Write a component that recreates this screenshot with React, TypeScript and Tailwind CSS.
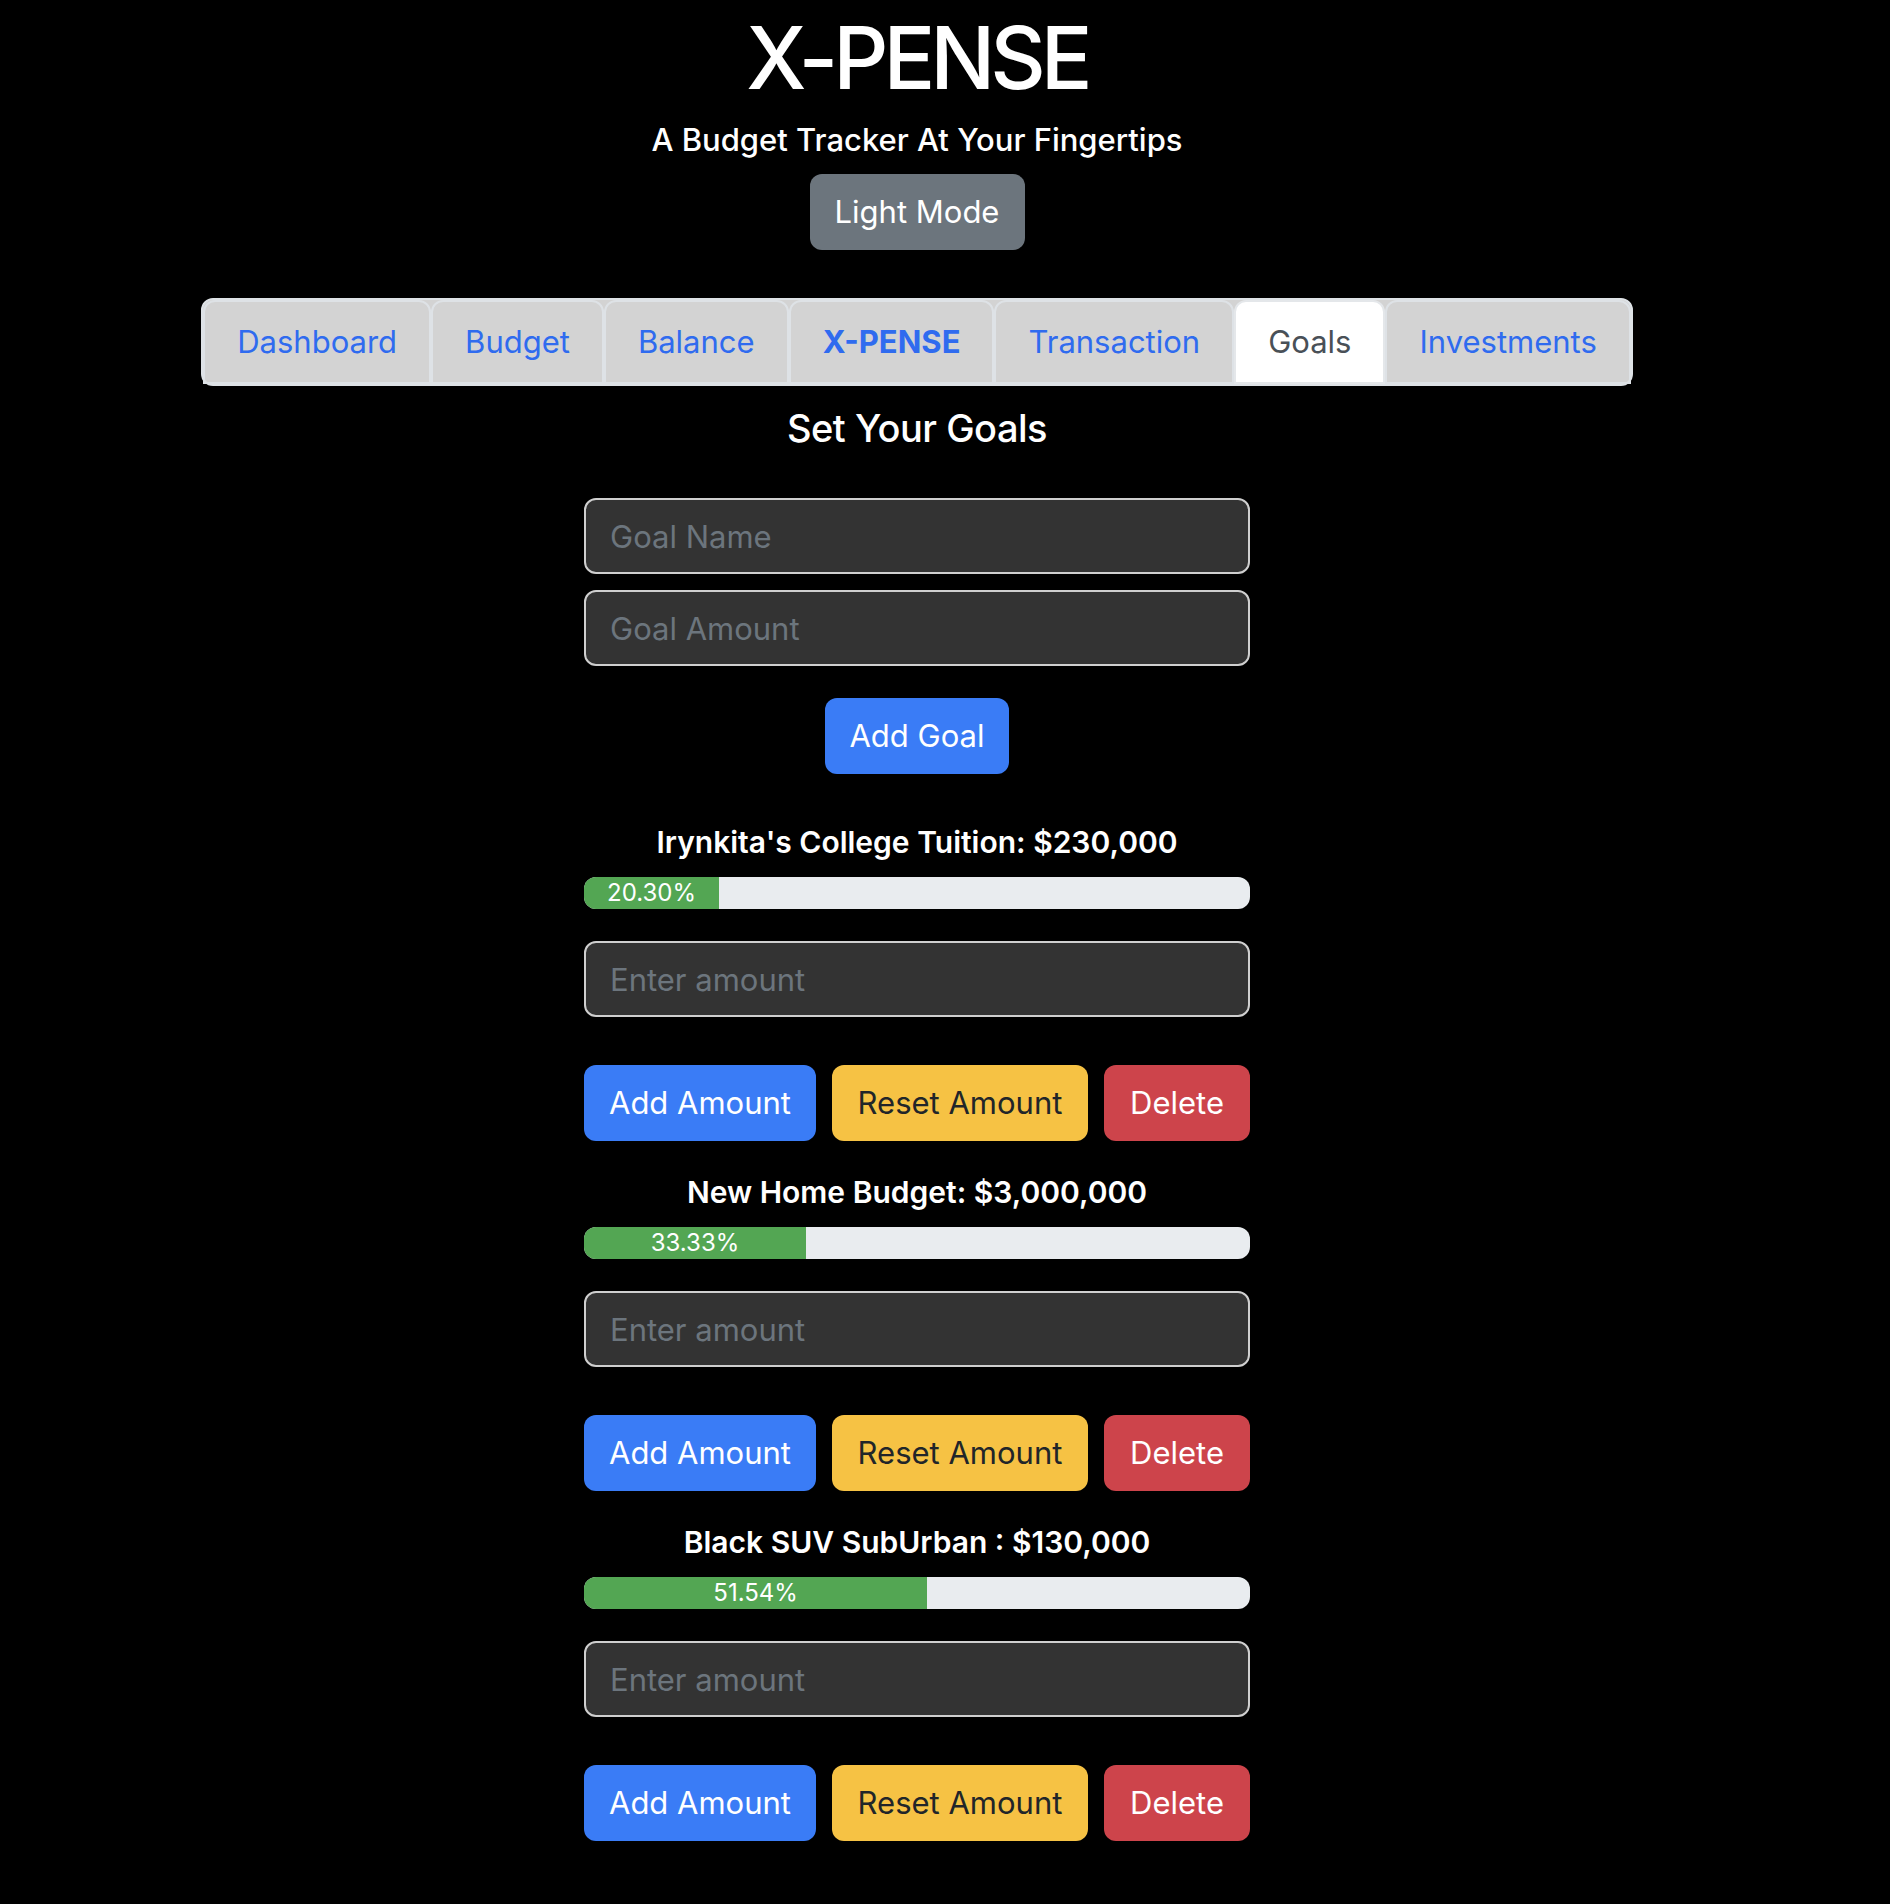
import React from 'react'

const tabs = [
  { name: 'Dashboard' },
  { name: 'Budget' },
  { name: 'Balance' },
  { name: 'X-PENSE', bold: true },
  { name: 'Transaction' },
  { name: 'Goals', active: true },
  { name: 'Investments' },
]

const goals = [
  { title: "Irynkita's College Tuition: $230,000", pct: 20.3 },
  { title: 'New Home Budget: $3,000,000', pct: 33.33 },
  { title: 'Black SUV SubUrban : $130,000', pct: 51.54 },
]

const inputCls =
  'w-full h-[76px] rounded-[12px] border-2 border-[#cfcfcf] bg-[#333333] px-[24px] text-[31px] text-white placeholder:text-[#6c757d] outline-none'

const GoalCard = ({ title, pct }: { title: string; pct: number }) => (
  <div className="flex flex-col w-full">
    <h5 className="h-[48px] leading-[48px] text-center text-[30px] font-semibold text-white">{title}</h5>
    <div className="mt-[11px] h-[32px] w-full rounded-[12px] bg-[#e9ecef] overflow-hidden flex">
      <div
        className="h-full bg-[#53a653] flex items-center justify-center text-[24px] text-white"
        style={{ width: `${pct}%` }}
      >
        {pct.toFixed(2)}%
      </div>
    </div>
    <input className={`${inputCls} mt-[32px]`} placeholder="Enter amount" />
    <div className="mt-[48px] mb-[27px] flex gap-4">
      <button className="w-[232px] h-[76px] rounded-[12px] bg-[#3a7cf6] text-[31px] text-white">Add Amount</button>
      <button className="w-[256px] h-[76px] rounded-[12px] bg-[#f6c244] text-[31px] text-[#212529]">Reset Amount</button>
      <button className="w-[146px] h-[76px] rounded-[12px] bg-[#cd444b] text-[31px] text-white">Delete</button>
    </div>
  </div>
)

export default function App() {
  return (
    <div className="min-h-[1904px] w-full bg-black" style={{ fontFamily: 'Inter, "Noto Sans", sans-serif' }}>
      <div className="w-[1834px] flex flex-col items-center">
        {/* Header */}
        <h1 className="h-[116px] leading-[116px] text-[86px] tracking-[-5px] font-medium text-white">X-PENSE</h1>
        <p className="h-[48px] leading-[48px] text-[31px] font-medium text-white">A Budget Tracker At Your Fingertips</p>
        <button className="mt-[10px] h-[76px] w-[215px] rounded-[12px] bg-[#6c757d] text-[31px] text-white">
          Light Mode
        </button>

        {/* Tabs */}
        <ul className="mt-[48px] flex rounded-[12px] border-2 border-[#dee2e6] bg-[#d3d3d3]">
          {tabs.map((t) => (
            <li key={t.name}>
              <a
                className={`block h-[84px] leading-[80px] px-[32px] border-2 rounded-t-[12px] text-[31px] ${
                  t.active
                    ? 'bg-white border-[#e4e7ea] text-[#495057]'
                    : 'border-[#dee2e6] text-[#2f6bef]'
                } ${t.bold ? 'font-bold' : ''}`}
              >
                {t.name}
              </a>
            </li>
          ))}
        </ul>

        {/* Goals */}
        <h4 className="mt-[12px] h-[60px] leading-[60px] text-[38px] tracking-[-0.5px] font-medium text-white">Set Your Goals</h4>
        <div className="mt-[40px] w-[666px] flex flex-col items-center">
          <input className={inputCls} placeholder="Goal Name" />
          <input className={`${inputCls} mt-[16px]`} placeholder="Goal Amount" />
          <button className="mt-[32px] h-[76px] w-[184px] rounded-[12px] bg-[#3a7cf6] text-[31px] text-white">
            Add Goal
          </button>
          <div className="mt-[44px] w-full flex flex-col">
            {goals.map((g) => (
              <GoalCard key={g.title} title={g.title} pct={g.pct} />
            ))}
          </div>
        </div>
      </div>
    </div>
  )
}
